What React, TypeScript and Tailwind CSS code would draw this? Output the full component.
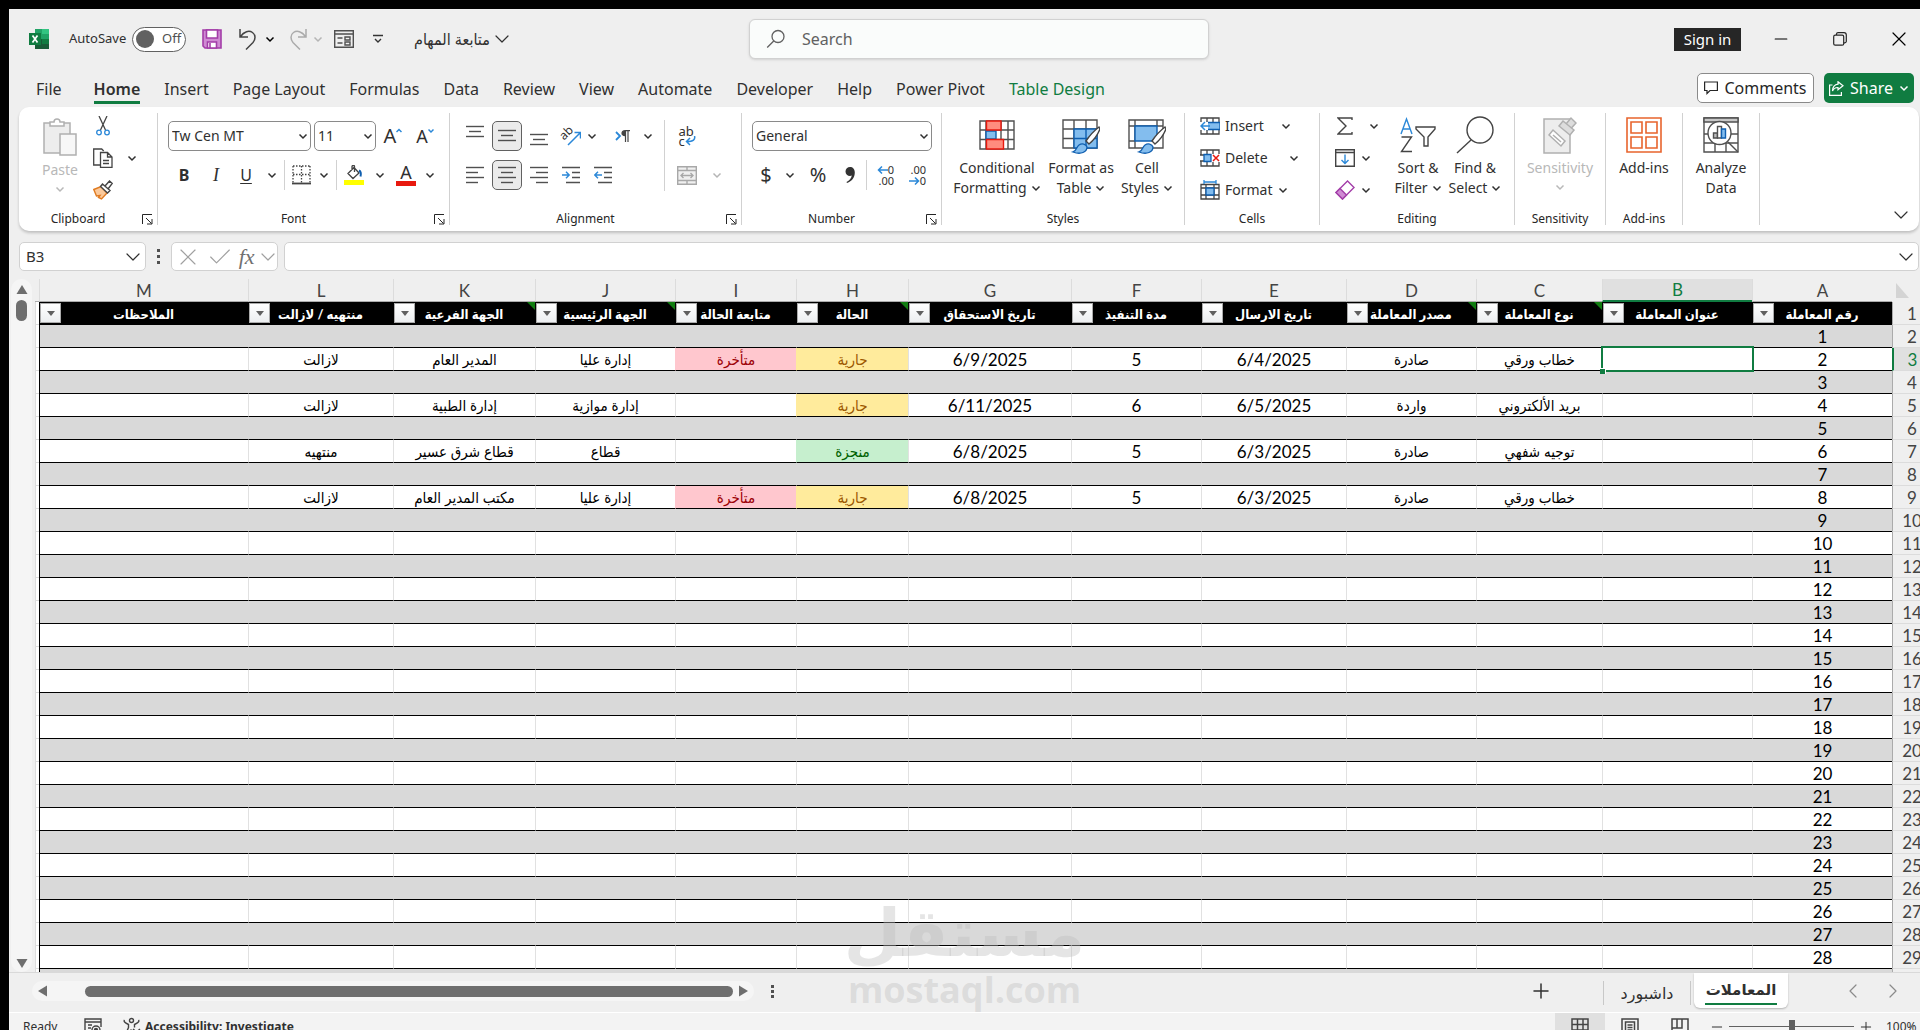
import type { ReactNode } from "react";
import { Check, ChevronDown, ChevronLeft, ChevronRight, Minus, Plus, X } from "lucide-react";
import clsx from "clsx";

const ink = "#444444";
const blue = "#2b88d8";

const tabs = [
	"File",
	"Home",
	"Insert",
	"Page Layout",
	"Formulas",
	"Data",
	"Review",
	"View",
	"Automate",
	"Developer",
	"Help",
	"Power Pivot",
	"Table Design",
];

interface Column {
	letter: string;
	title: string;
	width: string;
	flagged?: boolean;
}

// The sheet runs right to left, so column A comes first.
const columns: Column[] = [
	{ letter: "A", title: "رقم المعاملة", width: "w-[140px]" },
	{ letter: "B", title: "عنوان المعاملة", width: "w-[150px]" },
	{ letter: "C", title: "نوع المعاملة", width: "w-[126px]", flagged: true },
	{ letter: "D", title: "مصدر المعاملة", width: "w-[130px]", flagged: true },
	{ letter: "E", title: "تاريخ الارسال", width: "w-[145px]" },
	{ letter: "F", title: "مدة التنفيذ", width: "w-[130px]" },
	{ letter: "G", title: "تاريخ الاستحقاق", width: "w-[163px]" },
	{ letter: "H", title: "الحالة", width: "w-[112px]", flagged: true },
	{ letter: "I", title: "متابعة الحالة", width: "w-[121px]" },
	{ letter: "J", title: "الجهة الرئيسية", width: "w-[140px]", flagged: true },
	{ letter: "K", title: "الجهة الفرعية", width: "w-[142px]", flagged: true },
	{ letter: "L", title: "منتهيه / لازالت", width: "w-[145px]" },
	{ letter: "M", title: "الملاحظات", width: "w-auto" },
];

const records: Record<number, Record<string, string>> = {
	2: { C: "خطاب ورقي", D: "صادرة", E: "6/4/2025", F: "5", G: "6/9/2025", H: "جارية", I: "متأخرة", J: "إدارة عليا", K: "المدير العام", L: "لازالت" },
	4: { C: "بريد الألكتروني", D: "واردة", E: "6/5/2025", F: "6", G: "6/11/2025", H: "جارية", J: "إدارة موازية", K: "إدارة الطبية", L: "لازالت" },
	6: { C: "توجيه شفهي", D: "صادرة", E: "6/3/2025", F: "5", G: "6/8/2025", H: "منجزة", J: "قطاع", K: "قطاع شرق عسير", L: "منتهيه" },
	8: { C: "خطاب ورقي", D: "صادرة", E: "6/3/2025", F: "5", G: "6/8/2025", H: "جارية", I: "متأخرة", J: "إدارة عليا", K: "مكتب المدير العام", L: "لازالت" },
};

const statusTone: Record<string, string> = {
	"جارية": "bg-[#ffeb9c] text-[#9c5700]",
	"متأخرة": "bg-[#ffc7ce] text-[#9c0006]",
	"منجزة": "bg-[#c6efce] text-[#006100]",
};

const rowNumbers = Array.from({ length: 29 }, (_, i) => i + 1);

function Caret({ className }: { className?: string }) {
	return (
		<svg viewBox="0 0 10 10" className={clsx("h-[10px] w-[10px] shrink-0", className)} fill="none" stroke="currentColor" strokeWidth="1.5">
			<path d="M1.5 3.5 5 7l3.5-3.5" />
		</svg>
	);
}

function CaretButton({ label, className }: { label: string; className?: string }) {
	return (
		<button type="button" aria-label={label} className={clsx("flex h-8 shrink-0 items-center justify-center", className ?? "w-4")}>
			<Caret />
		</button>
	);
}

function IconButton({ label, className, children }: { label: string; className?: string; children: ReactNode }) {
	return (
		<button type="button" aria-label={label} className={clsx("flex h-8 shrink-0 items-center justify-center", className ?? "w-8")}>
			{children}
		</button>
	);
}

function Divider() {
	return <div className="my-[6px] w-px shrink-0 bg-[#d1d1d1]" />;
}

function Group({ label, launcher, className, children }: { label: string; launcher?: boolean; className: string; children: ReactNode }) {
	return (
		<>
			<section aria-label={label} className={clsx("flex shrink-0 flex-col", className)}>
				<div className="h-[101px] pt-[3px]">{children}</div>
				<div className="flex h-[22px] items-center text-xs text-[#262626]">
					<span className="flex-1 text-center">{label}</span>
					{launcher && (
						<button type="button" aria-label={`${label} settings`} className="flex w-5 justify-center">
							<svg viewBox="0 0 11 11" className="h-[11px] w-[11px]" fill="none" stroke="#262626">
								<path d="M.5 10V.5H10M4 4l5.5 5.5M10 5v5H5" />
							</svg>
						</button>
					)}
				</div>
			</section>
			<Divider />
		</>
	);
}

function BigButton({ lines, caret, icon, className, disabled }: { lines: string[]; caret?: boolean; icon: ReactNode; className: string; disabled?: boolean }) {
	const caretBelow = caret && lines.length === 1;
	return (
		<button type="button" disabled={disabled} className={clsx("flex flex-col items-center text-sm leading-5", className, disabled ? "text-[#b8b8b8]" : "text-[#303030]")}>
			<span className="flex h-[46px] items-center">{icon}</span>
			{lines.map((line, i) => (
				<span key={line} className="flex h-5 items-center gap-1 whitespace-nowrap">
					{line}
					{caret && !caretBelow && i === lines.length - 1 && <Caret />}
				</span>
			))}
			{caretBelow && <Caret className="mt-1" />}
		</button>
	);
}

const lineSets = {
	left: [[0, 18], [0, 12], [0, 18], [0, 12]],
	center: [[0, 18], [3, 15], [0, 18], [3, 15]],
	right: [[0, 18], [6, 18], [0, 18], [6, 18]],
	vertical: [[0, 18], [3, 15], [0, 18]],
};

function Lines({ kind, offset = 0 }: { kind: keyof typeof lineSets; offset?: number }) {
	return (
		<svg viewBox="0 0 18 26" className="h-[26px] w-[18px]" stroke="#505050" strokeWidth="1.4">
			{lineSets[kind].map(([from, to], i) => (
				<path key={i} d={`M${from} ${5.5 + offset + i * 5}H${to}`} />
			))}
		</svg>
	);
}

function Indent({ out }: { out?: boolean }) {
	return (
		<svg viewBox="0 0 18 20" className="h-5 w-[18px]" fill="none" stroke="#505050" strokeWidth="1.4">
			<path d="M0 2.5h18M10 7.5h8M10 12.5h8M4 17.5h14" />
			<path d={out ? "M8 10H1M4 6.8.8 10 4 13.2" : "M0 10h7M4 6.8 7.2 10 4 13.2"} stroke={blue} />
		</svg>
	);
}

function Brush() {
	return (
		<g>
			<path d="M37 8c-4 3-9 8-13 14l3 3c5-4 9-10 11-15Z" fill="#fff" stroke={ink} />
			<path d="M11 33c4-1 3-5 6-7 3-2 7-1 8 2 0 5-6 8-14 5Z" fill="#83bdee" stroke="#0f5fb0" strokeWidth="1.3" />
		</g>
	);
}

function Decimals({ more }: { more?: boolean }) {
	const arrow = (
		<svg viewBox="0 0 11 8" className="h-2 w-[11px]" fill="none" stroke={blue} strokeWidth="1.5">
			<path d={more ? "M11 4H1.5M5 .5 1.5 4 5 7.5" : "M0 4h9.5M6 .5 9.500 4 6 7.500"} />
		</svg>
	);
	return (
		<span className="flex w-[22px] flex-col text-[11px] leading-[11px]">
			<span className="flex items-center justify-end">{more && arrow}{more ? "0" : ".00"}</span>
			<span className="flex items-center justify-end">{!more && arrow}{more ? ".00" : "0"}</span>
		</span>
	);
}

function Dots() {
	return (
		<>
			<span className="h-[3px] w-[3px] bg-[#505050]" />
			<span className="h-[3px] w-[3px] bg-[#505050]" />
			<span className="h-[3px] w-[3px] bg-[#505050]" />
		</>
	);
}

function TitleBar() {
	return (
		<header className="grid h-[60px] shrink-0 grid-cols-[740fr_460px_711fr] items-center">
			<div className="flex items-center pl-5">
				<svg viewBox="0 0 20 20" className="h-5 w-5">
					<path d="M6 0h14v20H6Z" fill="#21a366" />
					<path d="M13 0h7v5h-7Z" fill="#33c481" />
					<path d="M6 10h14v10H6Z" fill="#185c37" />
					<path d="M13 10h7v5h-7Z" fill="#107c41" />
					<path d="M0 4h12v12H0Z" fill="#107c41" />
					<path d="m3.5 6.500 5 7M8.500 6.500l-5 7" stroke="#fff" strokeWidth="1.7" />
				</svg>
				<label className="ml-5 flex w-[117px] items-center justify-between text-[13px] text-[#303030]">
					AutoSave
					<input type="checkbox" className="peer sr-only" />
					<span className="flex h-[25px] w-[54px] items-center gap-2 rounded-full border border-[#616161] bg-white px-[3px] text-[13px] text-[#505050]">
						<span className="h-[18px] w-[18px] rounded-full bg-[#616161]" />
						Off
					</span>
				</label>
				<IconButton label="Save" className="ml-4 w-5">
					<svg viewBox="0 0 20 20" className="h-5 w-5" stroke="#a33da8" strokeWidth="1.6">
						<path d="M1 1h18v18H3l-2-2Z" fill="#cf8bd3" />
						<path d="M4.500 1h11v8h-11ZM5.500 13h9v6h-9Z" fill="#fff" />
						<path d="M8 14v5" />
					</svg>
				</IconButton>
				<IconButton label="Undo" className="ml-4 w-5">
					<svg viewBox="0 0 20 22" className="h-[22px] w-5" fill="none" stroke={ink} strokeWidth="1.500">
						<path d="M2 1v8h8M2.500 8.500C6 3.500 11 2 14.500 4.500c3.500 2.500 3 7 .5 10L8 21.500" />
					</svg>
				</IconButton>
				<CaretButton label="Undo history" className="ml-1 w-4" />
				<IconButton label="Redo" className="ml-[10px] w-5">
					<svg viewBox="0 0 20 22" className="h-[22px] w-5" fill="none" stroke="#ababab" strokeWidth="1.500">
						<path d="M18 1v8h-8M17.500 8.500C14 3.500 9 2 5.500 4.500 2 7 2.500 11.500 5 14.500l7 7" />
					</svg>
				</IconButton>
				<span className="text-[#b5b5b5]"><CaretButton label="Redo history" className="ml-[2px] w-4" /></span>
				<IconButton label="Form" className="ml-2 w-5">
					<svg viewBox="0 0 20 18" className="h-[18px] w-5" fill="none" stroke="#505050" strokeWidth="1.400">
						<path d="M.7.7h18.600v16.600H.7ZM.7 4h18.600M3.500 8h5M11 7h5v3h-5ZM3.500 13h5M11 12h5v3h-5Z" />
					</svg>
				</IconButton>
				<IconButton label="Customize toolbar" className="ml-4 w-4">
					<svg viewBox="0 0 10 10" className="h-[10px] w-[10px]" fill="none" stroke="#333" strokeWidth="1.400">
						<path d="M0 1.500h10M2 5l3 3 3-3" />
					</svg>
				</IconButton>
				<button type="button" className="ml-7 flex items-center text-base text-[#303030]">
					<span dir="rtl" className="font-['Noto_Sans','DejaVu_Sans_Condensed','DejaVu_Sans',sans-serif]">متابعة المهام</span>
					<ChevronDown className="h-6 w-6" strokeWidth={1.200} />
				</button>
			</div>
			<label className="flex h-[40px] items-center gap-4 rounded-md border border-[#d1d1d1] bg-[#fafcfb] pl-4 shadow-sm">
				<svg viewBox="0 0 20 20" className="h-5 w-5" fill="none" stroke="#616161" strokeWidth="1.300">
					<circle cx="12" cy="7.500" r="6" />
					<path d="m7.700 12-6.500 6.500" />
				</svg>
				<input type="search" aria-label="Search" placeholder="Search" className="min-w-0 flex-1 bg-transparent text-base outline-none placeholder:text-[#616161]" />
			</label>
			<div className="flex items-center justify-end pr-[5px]">
				<button type="button" className="h-[23px] w-[67px] bg-[#262626] text-[15px] leading-[23px] text-white">Sign in</button>
				<IconButton label="Minimize" className="ml-6 w-8"><Minus className="h-5 w-5" strokeWidth={1.300} /></IconButton>
				<IconButton label="Restore" className="ml-[27px] w-8">
					<svg viewBox="0 0 14 14" className="h-[14px] w-[14px]" fill="none" stroke="#262626" strokeWidth="1.200">
						<rect x=".7" y="3.200" width="10" height="10" rx="1.500" />
						<path d="M3.500 3V2A1.500 1.500 0 0 1 5 .7h6A2.300 2.300 0 0 1 13.300 3v6.500a1.500 1.500 0 0 1-1.500 1.300h-1" />
					</svg>
				</IconButton>
				<IconButton label="Close" className="ml-[27px] w-8"><X className="h-6 w-6" strokeWidth={1.200} /></IconButton>
			</div>
		</header>
	);
}

function TabRow() {
	return (
		<nav className="flex h-[38px] shrink-0 items-start pl-[27px] pr-[6px]">
			<div className="flex flex-1 gap-6 pt-2">
				{tabs.map((tab) => (
					<button
						key={tab}
						type="button"
						className={clsx(
							"h-[27px] border-b-[3px] text-base leading-6 whitespace-nowrap",
							tab === "File" && "mr-2",
							tab === "Home" ? "border-[#107c41] font-semibold" : "border-transparent",
							tab === "Table Design" ? "text-[#107c41]" : "text-[#303030]",
						)}
					>
						{tab}
					</button>
				))}
			</div>
			<div className="flex gap-[10px] pt-1">
				<button type="button" className="flex h-[30px] w-[117px] items-center justify-center gap-[6px] rounded-[5px] border border-[#8a8a8a] bg-white text-base text-[#262626]">
					<svg viewBox="0 0 14 14" className="h-[14px] w-[14px]" fill="none" stroke="#262626" strokeWidth="1.200">
						<path d="M.6 1h12.800v8.500H6L3 12.500v-3H.6Z" />
					</svg>
					Comments
				</button>
				<button type="button" className="flex h-[30px] w-[90px] items-center justify-center gap-[6px] rounded-[5px] bg-[#107c41] text-base text-white">
					<svg viewBox="0 0 15 15" className="h-[15px] w-[15px]" fill="none" stroke="#fff" strokeWidth="1.200">
						<path d="M3.500 4H.6v10.400h11.800V11M9 .8l5 4-5 4V6.500C6 6.300 4.500 8 3.500 10c.2-4 2.500-6.500 5.500-6.800Z" />
					</svg>
					Share
					<Caret />
				</button>
			</div>
		</nav>
	);
}

function Ribbon() {
	return (
		<div className="ml-[10px] mr-px flex h-[124px] shrink-0 rounded-[10px] bg-white text-[#303030] shadow-[0_2px_3px_rgba(0,0,0,0.2)]">
			<Group label="Clipboard" launcher className="w-[138px]">
				<div className="flex pl-[9px]">
					<BigButton
						disabled
						caret
						lines={["Paste"]}
						className="w-16 pt-1"
						icon={
							<svg viewBox="0 0 34 38" className="h-[38px] w-[34px]" fill="#ededed" stroke="#b0b0b0" strokeWidth="1.500">
								<path d="M1 5h26v30H1Z" />
								<path d="M7 8V4h4c0-4 6-4 6 0h4v4Z" fill="#fff" />
								<path d="M17 16h16v21H17Z" fill="#f7f7f7" />
							</svg>
						}
					/>
					<div>
						<IconButton label="Cut" className="w-[22px]">
							<svg viewBox="0 0 14 20" className="h-5 w-[14px]" fill="none" stroke={ink} strokeWidth="1.300">
								<path d="M3 0 9.500 14M11 0 4.500 14" />
								<circle cx="3" cy="16.500" r="2.300" stroke={blue} />
								<circle cx="11" cy="16.500" r="2.300" stroke={blue} />
							</svg>
						</IconButton>
						<div className="flex">
							<IconButton label="Copy" className="w-[22px]">
								<svg viewBox="0 0 20 20" className="h-5 w-5" fill="#fff" stroke={ink} strokeWidth="1.300">
									<path d="M7 17H.7V1h8l2 2" />
									<path d="M7.500 4.500h7l4.500 4.500v10.300H7.500ZM14.500 4.500V9H19M10 12.500h6M10 15.500h6" />
								</svg>
							</IconButton>
							<CaretButton label="Copy options" className="w-[36px]" />
						</div>
						<IconButton label="Format painter" className="w-[22px]">
							<svg viewBox="0 0 20 20" className="h-5 w-5" fill="none" strokeWidth="1.400">
								<path d="M.8 9.500 8 6.500l6 6.500-5.500 6-3-1.500 1.500-2-3.500.5Z" fill="#fbc99b" stroke="#e07a1f" />
								<path d="m7.500 6.500 2-2.500 7.500 6.500-2.500 2.500ZM12 6l4.500-5 2.700 2.500L15 9" fill="#fff" stroke={ink} />
							</svg>
						</IconButton>
					</div>
				</div>
			</Group>

			<Group label="Font" launcher className="w-[291px]">
				<div className="flex flex-col gap-[7px] pl-[10px] pt-[10px]">
					<div className="flex items-center">
						<label className="relative mr-[3px]">
							<select aria-label="Font" className="h-[30px] w-[143px] appearance-none rounded-[5px] border border-[#8a8a8a] bg-white pl-[3px] text-sm">
								<option>Tw Cen MT</option>
							</select>
							<Caret className="pointer-events-none absolute right-[3px] top-[10px]" />
						</label>
						<label className="relative mr-px">
							<select aria-label="Font size" className="h-[30px] w-[62px] appearance-none rounded-[5px] border border-[#8a8a8a] bg-white pl-[3px] text-sm">
								<option>11</option>
							</select>
							<Caret className="pointer-events-none absolute right-[3px] top-[10px]" />
						</label>
						<IconButton label="Increase font size">
							<span className="text-xl leading-6">A</span>
							<svg viewBox="0 0 6 16" className="h-4 w-[6px]" fill="none" stroke={blue} strokeWidth="1.500"><path d="m.5 4 2.500-2.500L5.500 4" /></svg>
						</IconButton>
						<IconButton label="Decrease font size">
							<span className="text-lg leading-6">A</span>
							<svg viewBox="0 0 6 16" className="h-4 w-[6px]" fill="none" stroke={blue} strokeWidth="1.500"><path d="M.5 1.500 3 4l2.500-2.500" /></svg>
						</IconButton>
					</div>
					<div className="flex items-center">
						<IconButton label="Bold"><span className="text-base font-bold">B</span></IconButton>
						<IconButton label="Italic"><span className="font-['Liberation_Serif',serif] text-lg italic">I</span></IconButton>
						<IconButton label="Underline" className="w-7"><span className="text-base underline underline-offset-2">U</span></IconButton>
						<CaretButton label="Underline style" className="ml-1 w-4" />
						<div className="ml-1 mr-px h-[30px] w-px bg-[#d1d1d1]" />
						<IconButton label="Borders" className="w-[30px]">
							<svg viewBox="0 0 19 20" className="h-5 w-[19px]" fill="none" stroke={ink} strokeWidth="1.300">
								<path d="M1 1h17M1 9.500h17M1 1v17M9.500 1v17M18 1v17" strokeDasharray="1.500 1.500" />
								<path d="M0 18.500h19" strokeWidth="1.800" />
							</svg>
						</IconButton>
						<CaretButton label="Border style" />
						<div className="ml-1 mr-px h-[30px] w-px bg-[#d1d1d1]" />
						<IconButton label="Fill color">
							<svg viewBox="0 0 20 20" className="h-5 w-5" fill="none" stroke={ink} strokeWidth="1.300">
								<path d="m4 8.500 6-6 5 5.500-6 5.500ZM8 5V1.500c0-1.500 2.500-1.500 2.500 0V7" />
								<path d="M15 5.500c2 1 2 4 1.500 6" stroke="#0f5fb0" strokeWidth="2" />
								<path d="M0 17.500h20" stroke="#ffff00" strokeWidth="5" />
							</svg>
						</IconButton>
						<CaretButton label="Fill colors" className="ml-[2px] w-4" />
						<IconButton label="Font color" className="ml-[2px] w-8">
							<span className="flex h-[22px] w-5 items-end justify-center border-b-[5px] border-[#e8190f] text-lg leading-[18px]">A</span>
						</IconButton>
						<CaretButton label="Font colors" />
					</div>
				</div>
			</Group>

			<Group label="Alignment" launcher className="w-[291px]">
				<div className="flex pl-[9px] pt-[10px]">
					<div className="flex w-[205px] flex-col gap-[7px]">
						<div className="flex">
							<IconButton label="Top align"><Lines kind="vertical" offset={-2} /></IconButton>
							<IconButton label="Middle align" className="w-8"><span className="flex h-[30px] w-[30px] items-center justify-center rounded-[5px] border border-[#616161] bg-[#ebebeb]"><Lines kind="vertical" offset={2} /></span></IconButton>
							<IconButton label="Bottom align"><Lines kind="vertical" offset={6} /></IconButton>
							<IconButton label="Orientation">
								<span className="relative h-5 w-5">
									<span className="absolute -left-[2px] -top-px -rotate-45 text-xs leading-4">ab</span>
									<svg viewBox="0 0 20 20" className="absolute inset-0 h-5 w-5" fill="none" stroke={blue} strokeWidth="1.500">
										<path d="M7 19 19 7M13.500 6.500h6v6" />
									</svg>
								</span>
							</IconButton>
							<CaretButton label="Orientation options" className="w-[10px]" />
							<IconButton label="Text direction" className="ml-2 w-[36px]">
								<svg viewBox="0 0 16 12" className="h-3 w-4" fill="none" stroke={ink} strokeWidth="1.200">
									<path d="m1 2 4 4-4 4" stroke={blue} strokeWidth="1.800" />
									<path d="M10 .7c-4 0-4 5 0 5ZM10.500 12V.7M13 12V.7M9.500.7H15" fill={ink} />
								</svg>
							</IconButton>
							<CaretButton label="Text direction options" className="w-[14px]" />
						</div>
						<div className="flex">
							<IconButton label="Align left"><Lines kind="left" /></IconButton>
							<IconButton label="Center"><span className="flex h-[30px] w-[30px] items-center justify-center rounded-[5px] border border-[#616161] bg-[#ebebeb]"><Lines kind="center" /></span></IconButton>
							<IconButton label="Align right"><Lines kind="right" /></IconButton>
							<IconButton label="Increase indent"><Indent /></IconButton>
							<IconButton label="Decrease indent"><Indent out /></IconButton>
						</div>
					</div>
					<div className="w-px bg-[#d1d1d1]" />
					<div className="flex flex-col gap-[7px] pl-[6px]">
						<IconButton label="Wrap text">
							<span className="flex flex-col items-start text-[13px] leading-[10px]">
								<span>ab</span>
								<span className="flex items-center">
									c
									<svg viewBox="0 0 11 10" className="h-[10px] w-[11px]" fill="none" stroke={blue} strokeWidth="1.500">
										<path d="M9.500 0c1 3.500-1 5.500-8 5.500M5 2 1.500 5.500 5 9" />
									</svg>
								</span>
							</span>
						</IconButton>
						<div className="flex text-[#b5b5b5]">
							<IconButton label="Merge and center">
								<svg viewBox="0 0 20 19" className="h-[19px] w-5" fill="#f0f0f0" stroke="#a8a8a8" strokeWidth="1.400">
									<path d="M.7.7h18.600v17.600H.7ZM.7 4.500h18.600M.7 14.500h18.600M10 .7v3.800M10 14.500v3.800M4 9.500h12M6.500 7 4 9.500 6.500 12M13.500 7 16 9.500 13.500 12" />
								</svg>
							</IconButton>
							<CaretButton label="Merge options" className="w-7" />
						</div>
					</div>
				</div>
			</Group>

			<Group label="Number" launcher className="w-[199px]">
				<div className="flex flex-col gap-[7px] pl-[10px] pt-[10px]">
					<label className="relative flex h-8 w-[180px] items-center">
						<select aria-label="Number format" className="h-[30px] w-full appearance-none rounded-[5px] border border-[#8a8a8a] bg-white pl-[3px] text-sm">
							<option>General</option>
						</select>
						<Caret className="pointer-events-none absolute right-[3px] top-[11px]" />
					</label>
					<div className="flex items-center">
						<IconButton label="Currency" className="w-7"><span className="text-xl">$</span></IconButton>
						<CaretButton label="Currency options" className="ml-[2px] w-4" />
						<IconButton label="Percent" className="ml-1 w-8"><span className="text-xl">%</span></IconButton>
						<IconButton label="Comma style">
							<svg viewBox="0 0 10 16" className="h-4 w-[10px]"><path d="M5 0a4.500 4.500 0 0 0 0 9c.8 0 1.300-.1 1.800-.4C6.300 11.500 4.500 13.500 1.500 15l.5 1c5-1.800 7.800-5.500 7.800-10.500C9.800 2 7.800 0 5 0Z" fill="#333" /></svg>
						</IconButton>
						<div className="h-[30px] w-px bg-[#d1d1d1]" />
						<IconButton label="Increase decimals"><Decimals more /></IconButton>
						<IconButton label="Decrease decimals"><Decimals /></IconButton>
					</div>
				</div>
			</Group>

			<Group label="Styles" className="w-[242px]">
				<div className="flex pl-[6px] pt-[2px]">
					<BigButton
						caret
						lines={["Conditional", "Formatting"]}
						className="w-[98px]"
						icon={
							<svg viewBox="0 0 36 30" className="h-[30px] w-9" fill="none" stroke="#505050" strokeWidth="1.400">
								<path d="M1 1h34v28H1ZM1 10h34M1 19.500h34M7 1v28M22 1v28M29 1v28" />
								<path d="M7 11h10v8H7Z" fill="#83bdee" stroke="#0f5fb0" />
								<path d="M7.500 1H22v9H7.500ZM7.500 19.500h17V29h-17Z" fill="#ff8c7e" stroke="#e8190f" />
							</svg>
						}
					/>
					<BigButton
						caret
						lines={["Format as", "Table"]}
						className="w-[70px]"
						icon={
							<svg viewBox="0 0 38 36" className="mt-1 h-9 w-[38px]" fill="none" stroke="#505050" strokeWidth="1.400">
								<path d="M1 1h34v28H1ZM1 10h34M1 19.500h34M12 1v28M24 1v28" />
								<path d="M12 10h23v19H12Z" fill="#83bdee" stroke="#0f5fb0" />
								<path d="M12 19.500h23M24 10v19" stroke="#0f5fb0" />
								<Brush />
							</svg>
						}
					/>
					<BigButton
						caret
						lines={["Cell", "Styles"]}
						className="w-[62px]"
						icon={
							<svg viewBox="0 0 38 36" className="mt-1 h-9 w-[38px]" fill="none" stroke="#505050" strokeWidth="1.400">
								<path d="M1 1h34v28H1ZM1 7h34M7 1v28M29 1v6M1 22h6" />
								<path d="M7 7h22v15H7Z" fill="#83bdee" stroke="#0f5fb0" />
								<Brush />
							</svg>
						}
					/>
				</div>
			</Group>

			<Group label="Cells" className="w-[134px]">
				<div className="flex flex-col pl-[15px] text-sm">
					<div className="flex">
						<button type="button" className="flex h-8 w-[66px] items-center gap-[5px]">
							<svg viewBox="0 0 20 18" className="h-[18px] w-5" fill="none" stroke={ink} strokeWidth="1.300">
								<path d="M1 1h18v16H1ZM1 6h18M1 12h18M7 1v16M13 1v16" />
								<path d="M7 5.500h13v7H7Z" fill="#83bdee" stroke="#0f5fb0" />
								<path d="M0 5h8v8H0Z" fill="#fff" stroke="none" />
								<path d="M10 9H1M5 5 1 9l4 4" stroke={blue} strokeWidth="1.500" />
							</svg>
							Insert
						</button>
						<CaretButton label="Insert options" className="w-10" />
					</div>
					<div className="flex">
						<button type="button" className="flex h-8 w-[74px] items-center gap-[5px]">
							<svg viewBox="0 0 20 18" className="h-[18px] w-5" fill="none" stroke={ink} strokeWidth="1.300">
								<path d="M1 6V1h18v4M1 12v5h18v-4M7 1v4M13 1v4M7 13v4M13 13v4M0 6h5M0 12h5" />
								<path d="M4 5.500h7v7H4Z" fill="#83bdee" stroke="#0f5fb0" />
								<path d="m13 6 6 6M19 6l-6 6" stroke="#e8190f" strokeWidth="1.500" />
							</svg>
							Delete
						</button>
						<CaretButton label="Delete options" className="w-10" />
					</div>
					<button type="button" className="flex h-8 items-center gap-[5px]">
						<svg viewBox="0 0 20 20" className="h-5 w-5" fill="none" stroke={ink} strokeWidth="1.300">
							<path d="M1 4.500h18V19H1ZM1 8h18M1 15h18M6 4.500V19M14 4.500V19" />
							<path d="M6 8h8v7H6Z" fill="#83bdee" stroke="#0f5fb0" />
							<path d="M4 2h12M4 0v4M16 0v4" stroke={blue} />
						</svg>
						Format
						<Caret />
					</button>
				</div>
			</Group>

			<Group label="Editing" className="w-[194px]">
				<div className="flex pl-[15px]">
					<div className="w-[48px]">
						<div className="flex">
							<IconButton label="AutoSum" className="w-5">
								<svg viewBox="0 0 16 18" className="h-[18px] w-4" fill="none" stroke={ink} strokeWidth="1.400"><path d="M15 3V1H1l8 8-8 8h14v-2" /></svg>
							</IconButton>
							<CaretButton label="AutoSum options" className="ml-[10px] w-[18px]" />
						</div>
						<div className="flex">
							<IconButton label="Fill" className="w-5">
								<svg viewBox="0 0 20 18" className="h-[18px] w-5" fill="none" stroke={ink} strokeWidth="1.400">
									<path d="M.7.7h18.600v16.600H.7ZM.7 3.500h18.600" />
									<path d="M10 5.500v9M6.500 11l3.500 3.500 3.500-3.500" stroke={blue} />
								</svg>
							</IconButton>
							<CaretButton label="Fill options" className="ml-[3px] w-4" />
						</div>
						<div className="flex">
							<IconButton label="Clear" className="w-5">
								<svg viewBox="0 0 20 20" className="h-5 w-5" fill="#fff" stroke="#a33da8" strokeWidth="1.400">
									<path d="M12.500 1 19 7.500 7.500 19 1 12.500Z" />
									<path d="M5 8.500 1 12.500 7.500 19l4-4Z" fill="#cf8bd3" />
								</svg>
							</IconButton>
							<CaretButton label="Clear options" className="ml-[3px] w-4" />
						</div>
					</div>
					<div className="flex pl-[6px] pt-[2px]">
						<BigButton
							caret
							lines={["Sort &", "Filter"]}
							className="w-[58px]"
							icon={
								<svg viewBox="0 0 36 36" className="h-9 w-9" fill="none" stroke={ink} strokeWidth="1.400">
									<path d="M1 17 6.500 2 12 17M3 12h7" stroke={blue} />
									<path d="M1.500 20h10l-10 14.500h10.500M16 10h19v2l-7 8v9h-4v-9l-8-8Z" />
								</svg>
							}
						/>
						<BigButton
							caret
							lines={["Find &", "Select"]}
							className="w-[56px]"
							icon={
								<svg viewBox="0 0 38 38" className="h-[38px] w-[38px]" fill="none" stroke={ink} strokeWidth="1.400">
									<circle cx="24" cy="14" r="13" />
									<path d="M15 24 1 37" />
								</svg>
							}
						/>
					</div>
				</div>
			</Group>

			<Group label="Sensitivity" className="w-[90px]">
				<BigButton
					disabled
					caret
					lines={["Sensitivity"]}
					className="w-full pt-[2px]"
					icon={
						<svg viewBox="0 0 34 38" className="h-[38px] w-[34px]" fill="#ededed" stroke="#b0b0b0" strokeWidth="1.500">
							<path d="M1 3h26v34H1Z" />
							<path d="m6 19 4-5 12 11-4 5Z" fill="#fff" />
							<path d="m10 19 8 7" />
							<path d="m16 10 4-5 11 9-4 5ZM23 8l5-6 5 5-5 5.500" fill="#ddd" />
						</svg>
					}
				/>
			</Group>

			<Group label="Add-ins" className="w-[76px]">
				<BigButton
					lines={["Add-ins"]}
					className="w-full pt-[2px]"
					icon={
						<svg viewBox="0 0 36 38" className="h-[38px] w-9" fill="none" stroke="#e8642d" strokeWidth="1.600">
							<path d="M1 2h34v34H1Z" />
							<path d="M5 6h11v11H5ZM20 6h11v11H20ZM5 21h11v11H5ZM20 21h11v11H20Z" />
						</svg>
					}
				/>
			</Group>

			<Group label="" className="w-[76px]">
				<BigButton
					lines={["Analyze", "Data"]}
					className="w-full pt-[2px]"
					icon={
						<svg viewBox="0 0 36 38" className="h-[38px] w-9" fill="none" stroke="#505050" strokeWidth="1.400">
							<path d="M1 2h34v34H1Z" />
							<path d="M1 2h34v4H1Z" fill="#c8c8c8" />
							<path d="M1 18h5M28 18h7M1 27h34M12 27v9M23 27v9" />
							<circle cx="16.500" cy="17" r="11.500" fill="#fff" />
							<path d="m25 26 10 10" />
							<path d="M10.500 17h4v5h-4Z" fill="#bbb" />
							<path d="M14.500 10.500h4V22h-4Z" fill="#fff" />
							<path d="M18.500 13h4v9h-4Z" fill="#83bdee" stroke="#0f5fb0" />
						</svg>
					}
				/>
			</Group>

			<div className="flex flex-1 items-end justify-end pb-1 pr-[6px]">
				<button type="button" aria-label="Collapse ribbon"><ChevronDown className="h-6 w-6" strokeWidth={1.200} /></button>
			</div>
		</div>
	);
}

function FormulaBar() {
	return (
		<div className="flex h-12 shrink-0 pb-2 pl-[10px] pr-px pt-[11px] text-[#303030]">
			<div className="flex w-[127px] items-center rounded-[5px] border border-[#d1d1d1] bg-white">
				<input aria-label="Name box" defaultValue="B3" className="min-w-0 flex-1 pl-[6px] text-[15px] outline-none" />
				<button type="button" aria-label="Named ranges"><ChevronDown className="h-6 w-6" strokeWidth={1.200} /></button>
			</div>
			<div className="flex w-[25px] flex-col items-center justify-center gap-[3px]">
				<Dots />
			</div>
			<div className="flex w-[107px] items-center justify-between rounded-[5px] border border-[#d1d1d1] bg-white pl-[2px] text-[#a0a0a0]">
				<button type="button" aria-label="Cancel"><X className="h-7 w-7" strokeWidth={1} /></button>
				<button type="button" aria-label="Enter"><Check className="h-7 w-7" strokeWidth={1} /></button>
				<button type="button" aria-label="Insert function" className="font-['Liberation_Serif',serif] text-[22px] leading-6 italic text-[#707070]">fx</button>
				<button type="button" aria-label="Functions" className="w-[18px] overflow-hidden"><ChevronDown className="-ml-[3px] h-6 w-6" strokeWidth={1.200} /></button>
			</div>
			<div className="ml-[6px] flex flex-1 items-center rounded-[5px] border border-[#d1d1d1] bg-white">
				<input aria-label="Formula" className="min-w-0 flex-1 px-2 text-sm outline-none" />
				<button type="button" aria-label="Expand formula bar"><ChevronDown className="h-6 w-6" strokeWidth={1.200} /></button>
			</div>
		</div>
	);
}

function Sheet() {
	return (
		<div className="flex min-h-0 flex-1 overflow-hidden">
			<div className="mx-[2px] flex w-[21px] shrink-0 flex-col items-center justify-between rounded-full bg-[#f5f5f5] pb-1 pt-[6px] text-[#6e6e6e]">
				<div className="flex flex-col items-center gap-[6px]">
					<svg viewBox="0 0 12 9" className="h-[9px] w-3"><path d="M6 0l5.500 9H.5Z" fill="currentColor" /></svg>
					<div className="h-[21px] w-[11px] rounded-full bg-current" />
				</div>
				<svg viewBox="0 0 12 9" className="h-[9px] w-3"><path d="M6 9 .5 0h11Z" fill="currentColor" /></svg>
			</div>
			<div className="-mr-[11px] ml-px min-w-0 flex-1">
				<table dir="rtl" className="w-full table-fixed border-separate border-spacing-0 font-[Lato,'DejaVu_Sans_Condensed','DejaVu_Sans',sans-serif] text-[17px] leading-5 text-black">
					<colgroup>
						<col className="w-[39px]" />
						{columns.map((col) => (
							<col key={col.letter} className={col.width} />
						))}
						<col className="w-1" />
					</colgroup>
					<thead>
						<tr className="h-[23px] text-[#444444]">
							<th aria-label="Select all" className="p-0">
								<svg viewBox="0 0 13 15" className="mr-[22px] h-[15px] w-[13px]"><path d="M0 0v15h13Z" fill="#d4d4d4" /></svg>
							</th>
							{columns.map(({ letter }) => (
								<th
									key={letter}
									scope="col"
									className={clsx(
										"border-l border-l-[#dcdcdc] px-0 pb-0 font-normal",
										letter === "B" ? "border-b-2 border-b-[#107c41] bg-[#e0e0e0] pt-px text-[#107c41]" : "border-b border-b-[#ababab] pt-[2px]",
									)}
								>
									{letter}
								</th>
							))}
							<th aria-hidden className="border-b border-b-[#ababab] p-0" />
						</tr>
						<tr className="h-[23px] bg-black text-white">
							<th scope="row" className="border-b border-l border-b-[#dcdcdc] border-l-[#ababab] bg-[#efefef] px-0 pt-[2px] pb-0 font-normal text-[#444444]">1</th>
							{columns.map((col) => (
								<th key={col.letter} scope="col" className="relative p-0 text-[13px] leading-[22px] font-bold whitespace-nowrap">
									{col.title}
									<button type="button" aria-label="تصفية" className="absolute left-px top-px flex h-5 w-[21px] items-center justify-center border border-[#ababab] bg-linear-to-b from-white to-[#eceef0]">
										<svg viewBox="0 0 8 5" className="h-[5px] w-2"><path d="M0 0h8L4 5Z" fill="#606060" /></svg>
									</button>
									{col.flagged && (
										<svg viewBox="0 0 8 8" className="absolute right-0 top-0 h-2 w-2"><path d="M0 0h8v8Z" fill="#107c10" /></svg>
									)}
								</th>
							))}
							<th aria-hidden className="border-b border-l border-[#dcdcdc] bg-white p-0" />
						</tr>
					</thead>
					<tbody>
						{rowNumbers.map((n) => {
							const banded = n % 2 === 1;
							const active = n === 2;
							return (
								<tr key={n} className={clsx("h-[23px]", banded ? "bg-[#d9d9d9]" : "bg-white")}>
									<th
										scope="row"
										className={clsx(
											"border-b border-b-[#dcdcdc] px-0 pt-[2px] pb-0 font-normal",
											active ? "border-l-2 border-l-[#107c41] bg-[#e0e0e0] text-[#107c41]" : "border-l border-l-[#ababab] bg-[#efefef] text-[#444444]",
										)}
									>
										{n + 1}
									</th>
									{columns.map(({ letter }) => {
										const value = letter === "A" ? String(n) : (records[n]?.[letter] ?? "");
										const arabic = /[\u0600-\u06ff]/.test(value);
										return (
											<td
												key={letter}
												className={clsx(
													"relative border-b border-b-black px-0 pb-0 text-center whitespace-nowrap",
													arabic ? "pt-0 text-[15px]" : "pt-[2px]",
													letter === "M" ? "border-l border-l-black" : banded || statusTone[value] ? "border-l border-l-transparent" : "border-l border-l-[#e1e1e1]",
													statusTone[value],
												)}
											>
												{value}
												{active && letter === "B" && (
													<div className="absolute -inset-[2px] z-10 border-2 border-[#107c41]">
														<span className="absolute -bottom-1 -left-[3px] h-[6px] w-[6px] border-r border-t border-white bg-[#107c41]" />
													</div>
												)}
											</td>
										);
									})}
									<td aria-hidden className="border-b border-l border-[#dcdcdc] bg-white p-0" />
								</tr>
							);
						})}
					</tbody>
				</table>
			</div>
		</div>
	);
}

function SheetTabs() {
	return (
		<div className="flex h-10 shrink-0 items-start border-t border-[#d9d9d9] text-[#303030]">
			<div className="mt-2 ml-[23px] flex h-5 w-[722px] items-center justify-between rounded-full bg-[#f5f5f5] px-[6px] text-[#6e6e6e]">
				<svg viewBox="0 0 9 12" className="h-3 w-[9px]"><path d="M0 6 9 .5v11Z" fill="currentColor" /></svg>
				<div className="ml-[38px] h-[11px] flex-1 rounded-full bg-current" />
				<svg viewBox="0 0 9 12" className="ml-[6px] h-3 w-[9px]"><path d="M9 6 0 .5v11Z" fill="currentColor" /></svg>
			</div>
			<div className="ml-[17px] mt-3 flex flex-col gap-[2px]">
				<Dots />
			</div>
			<div className="flex-1" />
			<button type="button" aria-label="New sheet" className="mt-[6px] mr-[50px]"><Plus className="h-6 w-6" strokeWidth={1.500} /></button>
			<div className="flex h-[39px] font-['Noto_Sans','DejaVu_Sans',sans-serif] text-base">
				<button type="button" className="my-2 h-6 w-[88px] border-x border-[#c8c8c8] leading-6">داشبورد</button>
				<button type="button" className="ml-[3px] flex h-[35px] w-[94px] items-start justify-center rounded-b-md bg-white pt-1 font-semibold shadow-[0_1px_2px_rgba(0,0,0,0.25)]">
					<span className="h-7 w-[72px] border-b-2 border-[#107c41] text-[15px] leading-6">المعاملات</span>
				</button>
			</div>
			<button type="button" aria-label="Previous sheets" className="mt-[6px] ml-[53px] text-[#8a8a8a]"><ChevronLeft className="h-6 w-6" strokeWidth={1.200} /></button>
			<button type="button" aria-label="Next sheets" className="mt-[6px] ml-4 mr-[15px] text-[#8a8a8a]"><ChevronRight className="h-6 w-6" strokeWidth={1.200} /></button>
		</div>
	);
}

function StatusBar() {
	return (
		<footer className="-mb-[10px] flex h-7 shrink-0 items-center border-t border-white bg-[#f3f3f3] text-xs text-[#303030]">
			<span className="ml-[14px] w-[61px]">Ready</span>
			<svg viewBox="0 0 18 18" className="h-[18px] w-[18px]" fill="none" stroke={ink} strokeWidth="1.400">
				<path d="M7 16H1V1h16v8M1 4h16M4 7h4M4 10h3M4 13h3" />
				<circle cx="12" cy="12" r="4" />
				<circle cx="12" cy="12" r="1.500" fill={ink} />
			</svg>
			<button type="button" className="ml-[21px] flex items-center gap-[2px] font-bold">
				<svg viewBox="0 0 20 20" className="h-5 w-5" fill="none" stroke={ink} strokeWidth="1.400">
					<circle cx="8.500" cy="3.500" r="2" />
					<path d="M1.500 3c-1 1.500 0 2.500 4 4.500v3l-3 7c1 1.500 2 1 4-3l2-2M15.500 3c1 1.500 0 2.500-4 4.500v3M10 12l7 6M17 12l-7 6" />
				</svg>
				Accessibility: Investigate
			</button>
			<div className="flex-1" />
			<div className="flex">
				<button type="button" aria-label="Normal view" className="flex h-7 w-[50px] items-center justify-center bg-[#e0e0e0]">
					<svg viewBox="0 0 18 18" className="h-[18px] w-[18px]" fill="none" stroke={ink} strokeWidth="1.500"><path d="M1 1h16v16H1ZM1 6.500h16M1 12h16M6.500 1v16M12 1v16" /></svg>
				</button>
				<button type="button" aria-label="Page layout view" className="flex h-7 w-[50px] items-center justify-center">
					<svg viewBox="0 0 18 18" className="h-[18px] w-[18px]" fill="none" stroke={ink} strokeWidth="1.500"><path d="M1 1h16v16H1ZM4.500 4h9v12h-9ZM6.500 7h5M6.500 9.500h5M6.500 12h5" /></svg>
				</button>
				<button type="button" aria-label="Page break view" className="flex h-7 w-[50px] items-center justify-center">
					<svg viewBox="0 0 18 18" className="h-[18px] w-[18px]" fill="none" stroke={ink} strokeWidth="1.500"><path d="M1 1h16v16H1ZM1 10h10V1M6 1v9" /></svg>
				</button>
			</div>
			<button type="button" aria-label="Zoom out" className="ml-1"><Minus className="h-4 w-4" strokeWidth={1.500} /></button>
			<input
				type="range"
				aria-label="Zoom"
				min={10}
				max={190}
				defaultValue={100}
				className="mx-1 h-px w-[125px] appearance-none bg-[#616161] [&::-webkit-slider-thumb]:h-[14px] [&::-webkit-slider-thumb]:w-[6px] [&::-webkit-slider-thumb]:appearance-none [&::-webkit-slider-thumb]:bg-[#616161]"
			/>
			<button type="button" aria-label="Zoom in"><Plus className="h-4 w-4" strokeWidth={1.500} /></button>
			<span className="ml-3 w-[34px]">100%</span>
		</footer>
	);
}

function Watermark() {
	return (
		<div className="pointer-events-none absolute bottom-5 left-1/2 z-20 flex w-[240px] -translate-x-1/2 flex-col items-center font-bold text-[#bdbdbd]/40">
			<div dir="rtl" className="font-['DejaVu_Sans',sans-serif] text-[66px] leading-[72px]">مستقل</div>
			<div className="font-['Open_Sans',sans-serif] text-4xl leading-10">mostaql.com</div>
		</div>
	);
}

export default function App() {
	return (
		<main className="relative flex h-screen flex-col overflow-hidden border-l-[9px] border-t-[9px] border-black bg-[#efefef] font-['Noto_Sans','DejaVu_Sans',sans-serif]">
			<TitleBar />
			<TabRow />
			<Ribbon />
			<FormulaBar />
			<Sheet />
			<SheetTabs />
			<StatusBar />
			<Watermark />
		</main>
	);
}
